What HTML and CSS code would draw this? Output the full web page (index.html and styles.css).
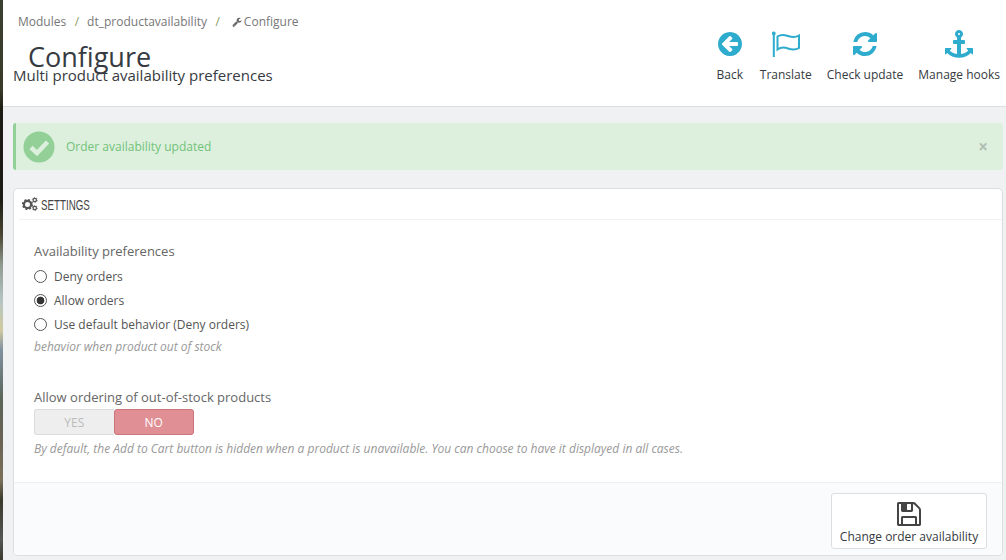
FILE: index.html
```html
<!DOCTYPE html>
<html lang="en">
<head>
<meta charset="utf-8">
<title>Configure</title>
<link rel="stylesheet" href="styles.css">
</head>
<body>
<div class="strip"></div>
<div class="main">
  <header class="head">
    <div class="head-left">
      <nav class="crumbs">
        <span>Modules</span><span class="sep">/</span><span>dt_productavailability</span><span class="sep">/</span>
        <span class="crumb-last"><svg class="wrench" viewBox="0 0 1792 1792"><path d="M448 1472q0-26-19-45t-45-19-45 19-19 45 19 45 45 19 45-19 19-45zm644-420l-682 682q-37 37-90 37-52 0-91-37l-106-108q-38-36-38-90 0-53 38-91l681-681q39 98 114.500 173.500t173.500 114.500zm634-435q0 39-23 106-47 134-164.500 217.500t-258.500 83.500q-185 0-316.500-131.500t-131.500-316.500 131.500-316.500 316.500-131.500q58 0 121.500 16.500t107.500 46.500q16 11 16 28t-16 28l-293 169v224l193 107q5-3 79-48.500t135.500-81 70.500-35.500q15 0 23.500 10t8.500 25z"/></svg>Configure</span>
      </nav>
      <h1 class="title">Configure</h1>
      <h2 class="subtitle">Multi product availability preferences</h2>
    </div>
    <div class="tools">
      <a class="tool"><svg class="tool-icon" viewBox="0 0 1792 1792"><path d="M1408 960v-128q0-26-18.500-45t-45.500-19h-502l189-189q19-19 19-45t-19-45l-91-91q-18-18-45-18t-45 18l-362 362-91 91q-18 18-18 45t18 45l91 91 362 362q18 18 45 18t45-18l91-91q18-18 18-45t-18-45l-189-189h502q27 0 45.500-19t18.500-45zm256-64q0 209-103 385.500t-279.500 279.500-385.500 103-385.500-103-279.500-279.500-103-385.500 103-385.500 279.500-279.500 385.500-103 385.500 103 279.500 279.500 103 385.500z"/></svg><span>Back</span></a>
      <a class="tool"><svg class="tool-icon" viewBox="0 0 28 28"><circle class="flag-dot" cx="1.800" cy="3.500" r="1.900"/><path class="flag-line" d="M1.800 4V27"/><path class="flag-line" d="M5.500 6.500C9 4 12 4.500 16 6S23 8 27 5.500V18C23 20.500 20 20 16 18.500S9 17 5.500 19.500Z"/></svg><span>Translate</span></a>
      <a class="tool"><svg class="tool-icon" viewBox="-128 -128 1792 1792"><path d="M1511 928q0 5-1 7-64 268-268 434.500t-478 166.500q-146 0-282.500-55t-243.500-157l-129 129q-19 19-45 19t-45-19-19-45v-448q0-26 19-45t45-19h448q26 0 45 19t19 45-19 45l-137 137q71 66 161 102t187 36q134 0 250-65t186-179q11-17 53-117 8-23 30-23h192q13 0 22.500 9.500t9.500 22.500zm25-800v448q0 26-19 45t-45 19h-448q-26 0-45-19t-19-45 19-45l138-138q-148-137-349-137-134 0-250 65t-186 179q-11 17-53 117-8 23-30 23h-199q-13 0-22.500-9.500t-9.500-22.500v-7q65-268 270-434.500t480-166.500q146 0 284 55.500t245 156.500l130-129q19-19 45-19t45 19 19 45z"/></svg><span>Check update</span></a>
      <a class="tool"><svg class="tool-icon" viewBox="0 0 1792 1792"><path d="M960 256q0-26-19-45t-45-19-45 19-19 45 19 45 45 19 45-19 19-45zm832 928v352q0 22-20 30-8 2-12 2-12 0-23-9l-93-93q-119 143-318.500 226.500t-429.500 83.500-429.500-83.500-318.500-226.500l-93 93q-9 9-23 9-4 0-12-2-20-8-20-30v-352q0-14 9-23t23-9h352q22 0 30 20 8 19-7 35l-100 100q67 91 189.500 153.500t271.500 82.500v-647h-192q-26 0-45-19t-19-45v-128q0-26 19-45t45-19h192v-163q-58-34-93-92.500t-35-128.500q0-106 75-181t181-75 181 75 75 181q0 70-35 128.500t-93 92.500v163h192q26 0 45 19t19 45v128q0 26-19 45t-45 19h-192v647q149-20 271.500-82.500t189.500-153.500l-100-100q-15-16-7-35 8-20 30-20h352q14 0 23 9t9 23z"/></svg><span>Manage hooks</span></a>
    </div>
  </header>
  <div class="content">
    <div class="alert">
      <svg class="alert-icon" viewBox="0 0 32 32"><circle class="alert-disc" cx="16" cy="16" r="15.500"/><path class="alert-check" d="M8 16.500L14 22L24.500 11"/></svg>
      <span class="alert-text">Order availability updated</span>
      <span class="alert-close">×</span>
    </div>
    <section class="panel">
      <div class="panel-head">
        <svg class="cogs" viewBox="0 0 16 14"><circle class="cog-big" cx="5.500" cy="7.500" r="3.600"/><circle class="cog-big-teeth" cx="5.500" cy="7.500" r="4.900"/><circle class="cog-small" cx="12.800" cy="3" r="1.700"/><circle class="cog-small-teeth" cx="12.800" cy="3" r="2.500"/><circle class="cog-small" cx="12.800" cy="11" r="1.700"/><circle class="cog-small-teeth" cx="12.800" cy="11" r="2.500"/></svg>
        <span class="panel-title">SETTINGS</span>
      </div>
      <form class="panel-body">
        <div class="label">Availability preferences</div>
        <div class="radios">
          <label class="radio"><input type="radio" name="pref"><span>Deny orders</span></label>
          <label class="radio"><input type="radio" name="pref" checked><span>Allow orders</span></label>
          <label class="radio"><input type="radio" name="pref"><span>Use default behavior (Deny orders)</span></label>
        </div>
        <p class="help">behavior when product out of stock</p>
        <div class="label label-second">Allow ordering of out-of-stock products</div>
        <div class="switch">
          <span class="sw sw-yes">YES</span>
          <span class="sw sw-no">NO</span>
        </div>
        <p class="help help-second">By default, the Add to Cart button is hidden when a product is unavailable. You can choose to have it displayed in all cases.</p>
      </form>
      <div class="panel-foot">
        <button class="save" type="button">
          <svg class="save-icon" viewBox="0 0 1792 1792"><path d="M512 1536h768v-384h-768v384zm896 0h128v-896q0-14-10-38.500t-20-34.500l-281-281q-10-10-34-20t-39-10v416q0 40-28 68t-68 28h-576q-40 0-68-28t-28-68v-416h-128v1280h128v-416q0-40 28-68t68-28h832q40 0 68 28t28 68v416zm-384-928v-320q0-13-9.500-22.500t-22.500-9.500h-192q-13 0-22.500 9.500t-9.500 22.500v320q0 13 9.500 22.500t22.500 9.500h192q13 0 22.500-9.500t9.500-22.500zm640 32v928q0 40-28 68t-68 28h-1344q-40 0-68-28t-28-68v-1344q0-40 28-68t68-28h928q40 0 88 20t76 48l280 280q28 28 48 76t20 88z"/></svg>
          <span>Change order availability</span>
        </button>
      </div>
    </section>
  </div>
</div>
</body>
</html>
```
FILE: styles.css
```css
* { box-sizing: border-box; }
html, body { margin: 0; height: 560px; overflow: hidden; }
body {
  display: flex;
  font-family: "Open Sans", sans-serif;
  font-size: 12px;
  color: #555;
  background: #eff1f2;
}
.strip {
  flex: 0 0 3px;
  background: linear-gradient(180deg, #3a4030 0, #3a3a2a 90px, #1c1c14 110px, #1c1c14 200px, #4a4632 235px, #8f9a90 265px, #b5c4c2 300px, #cfc9a0 330px, #8090a0 350px, #5a6458 400px, #6a6254 440px, #7a7058 480px, #3a3a2c 500px, #555 540px, #3a3a30 560px);
}
.main { flex: 1; min-width: 0; display: flex; flex-direction: column; }

.head {
  height: 107px;
  flex: none;
  background: #fff;
  border-bottom: 1px solid #dcdee0;
  display: flex;
  justify-content: space-between;
}
.head-left { padding: 13px 0 0 10px; }
.crumbs { display: flex; padding-left: 5px; height: 17px; line-height: 17px; color: #777; font-size: 12px; }
.sep { margin: 0 8px 0 8.500px; color: #8a9a60; }
.crumb-last { margin-left: 4px; }
.wrench { width: 10px; height: 10px; fill: #666; margin-right: 2px; vertical-align: -1px; }
.title {
  margin: 11px 0 0 15px;
  font-size: 27px;
  font-weight: 400;
  line-height: 32px;
  color: #363a41;
}
.subtitle {
  margin: -8px 0 0;
  font-size: 15px;
  font-weight: 400;
  line-height: 20px;
  color: #363a41;
}
.tools { display: flex; align-items: flex-start; padding: 30px 0 0; }
.tool {
  display: flex;
  flex-direction: column;
  align-items: center;
  padding: 0 7.500px;
  color: #363a41;
  font-size: 12px;
  line-height: 17px;
}
.tool:first-child { padding-right: 8.500px; }
.tool:last-child { padding-right: 6px; }
.tool-icon { width: 28px; height: 28px; fill: #2eacce; margin-bottom: 8px; }
.flag-dot { fill: #2eacce; }
.flag-line { fill: none; stroke: #2eacce; stroke-width: 2; }

.content { flex: 1; padding: 16px 3px 0 10px; }
.alert {
  height: 47px;
  display: flex;
  align-items: center;
  background: #ddf0de;
  border-left: 3px solid #92d097;
  border-radius: 3px;
  padding: 0 15px 0 7px;
  color: #72c279;
  font-size: 12px;
}
.alert-icon { width: 32px; height: 32px; flex: none; margin-right: 11px; }
.alert-disc { fill: #92d097; }
.alert-check { fill: none; stroke: #ddf0de; stroke-width: 4.500; }
.alert-text { flex: 1; }
.alert-close { color: #b0bfb2; font-size: 17px; font-weight: 700; line-height: 1; }

.panel {
  margin-top: 18px;
  height: 368px;
  background: #fff;
  border: 1px solid #dcdee0;
  border-radius: 5px;
  display: flex;
  flex-direction: column;
  overflow: hidden;
}
.panel-head {
  height: 31px;
  margin: 0 0 0 5px;
  border-bottom: 1px solid #eff1f2;
  display: flex;
  align-items: center;
  padding-left: 3px;
  flex: none;
}
.cogs { width: 16px; height: 14px; margin-right: 3px; flex: none; }
.cog-big { fill: none; stroke: #555; stroke-width: 2.200; }
.cog-big-teeth { fill: none; stroke: #555; stroke-width: 1.400; stroke-dasharray: 2 1.850; }
.cog-small { fill: none; stroke: #555; stroke-width: 1.200; }
.cog-small-teeth { fill: none; stroke: #555; stroke-width: .8; stroke-dasharray: 1.300 1.300; }
.panel-title {
  font-family: "Liberation Sans", sans-serif;
  font-size: 15px;
  color: #444;
  transform: scaleX(.65);
  transform-origin: left center;
}
.panel-body { flex: 1; padding: 22px 0 0 20px; }
.label { font-size: 13px; line-height: 18px; color: #666; }
.radios { margin-top: 4px; }
.radio { display: flex; align-items: center; height: 24px; font-size: 12px; color: #555; }
.radio input {
  appearance: none;
  width: 13px;
  height: 13px;
  margin: 0 7px 0 0;
  border: 1px solid #555;
  border-radius: 50%;
  background: #fff;
}
.radio input:checked { background: radial-gradient(circle, #333 0, #333 3.500px, #fff 4.200px); }
.help { margin: 3px 0 0; font-size: 12px; line-height: 16px; font-style: italic; color: #999; }
.label-second { margin-top: 33px; }
.switch { display: flex; width: 160px; height: 26px; margin-top: 3px; }
.sw { flex: 1; display: flex; align-items: center; justify-content: center; font-size: 12px; }
.sw-yes { background: #eee; border: 1px solid #dcdcdc; border-right: 0; border-radius: 3px 0 0 3px; color: #bbb; }
.sw-no { background: #e08f95; border: 1px solid #c9757b; border-radius: 3px; color: #fff; }
.help-second { margin-top: 6px; }
.panel-foot {
  flex: none;
  height: 73px;
  background: #fafbfc;
  border-top: 1px solid #eff1f2;
  display: flex;
  justify-content: flex-end;
  align-items: flex-start;
  padding: 10px 15px 0 0;
}
.save {
  width: 156px;
  height: 56px;
  padding: 0;
  background: #fff;
  border: 1px solid #dcdee0;
  border-radius: 3px;
  display: flex;
  flex-direction: column;
  align-items: center;
  justify-content: flex-start;
  font-family: "Open Sans", sans-serif;
  font-size: 12px;
  color: #363a41;
}
.save-icon { width: 28px; height: 28px; fill: #444; margin-top: 6px; }
```
